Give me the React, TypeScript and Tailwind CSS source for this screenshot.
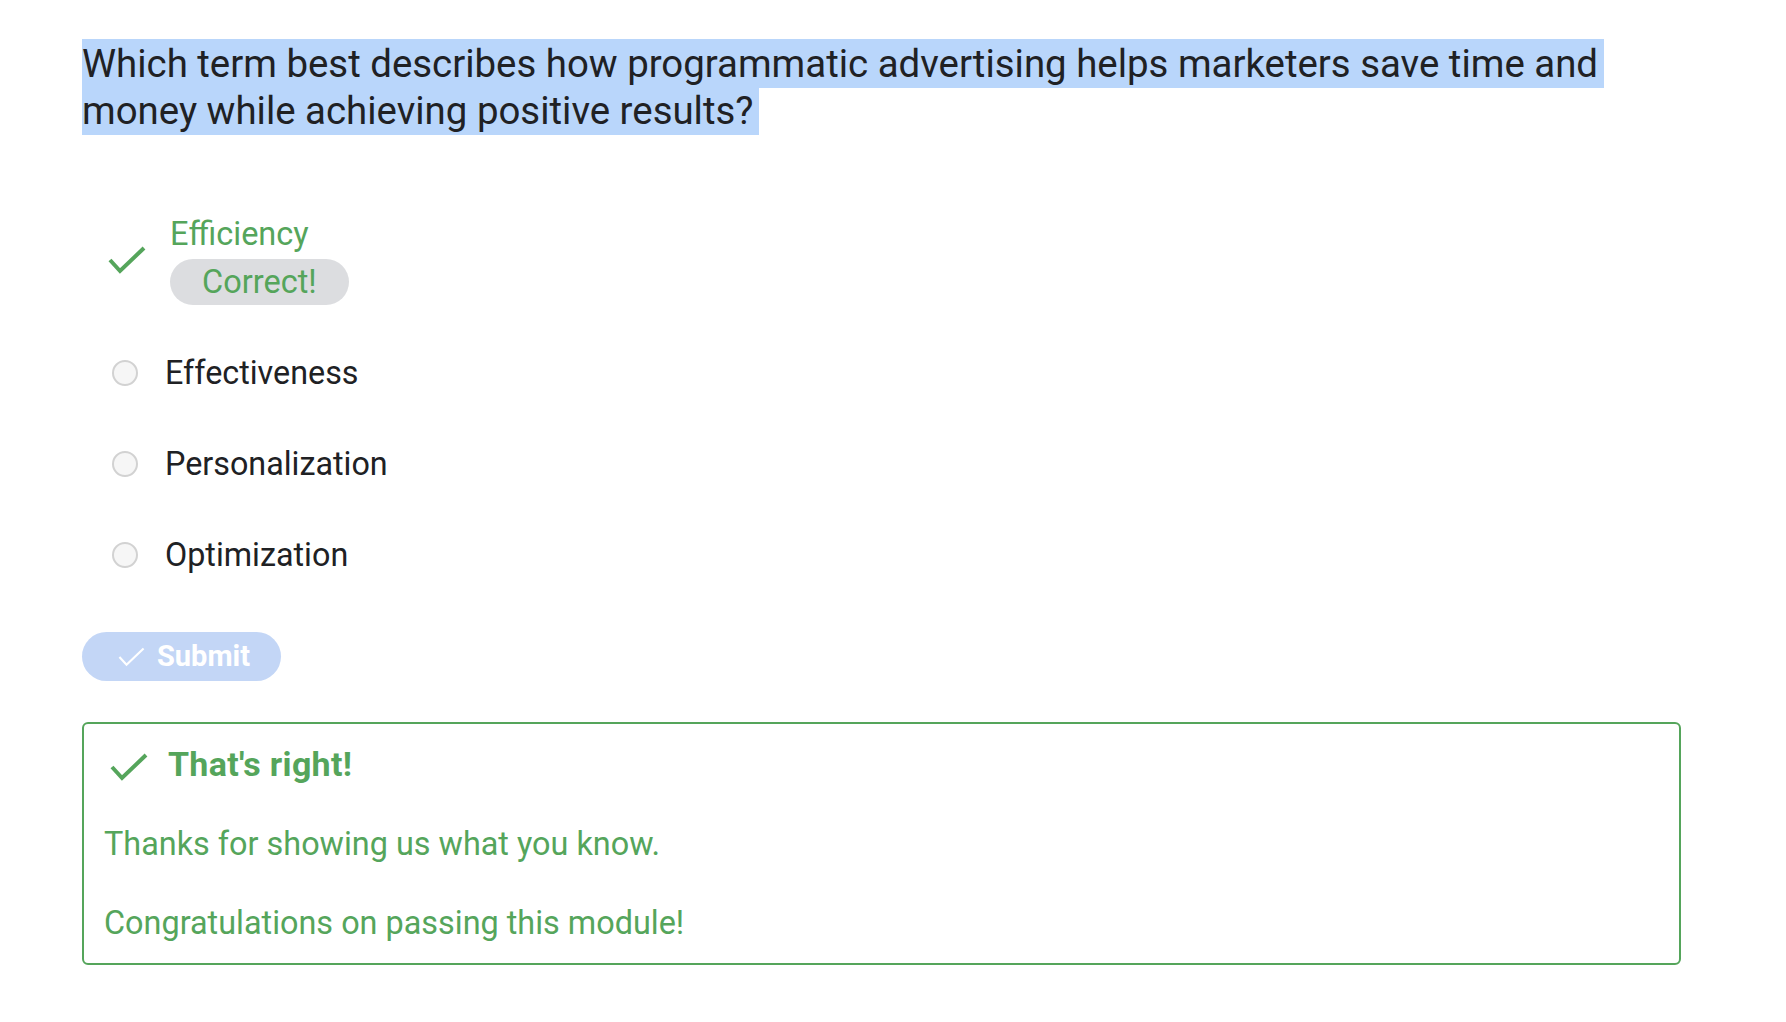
import React from "react";

function Check({ className, stroke = 4 }: { className?: string; stroke?: number }) {
  return (
    <svg className={className} viewBox="0 0 38 30" fill="none">
      <polyline points="2,15 12,26 36,3" stroke="currentColor" strokeWidth={stroke} strokeLinecap="butt" strokeLinejoin="miter" />
    </svg>
  );
}

function Radio() {
  return <span className="block w-[26px] h-[26px] rounded-full border-2 border-[#d2d2d2] bg-[#f6f6f6]" />;
}

export default function App() {
  const options = ["Effectiveness", "Personalization", "Optimization"];
  return (
    <div className="min-h-screen bg-white" style={{ fontFamily: "Roboto, 'Liberation Sans', sans-serif" }}>
      <div className="w-[1599px] ml-[82px] pt-[40px]">
        <p className="text-[38.4px] leading-[47px] text-[#202124] pr-[40px]">
          <span className="bg-[#b9d6fb] py-[2px] pr-[6px] [box-decoration-break:clone]">
            Which term best describes how programmatic advertising helps marketers save time and money while achieving positive results?
          </span>
        </p>

        <div className="mt-[78px] flex flex-col">
          <div className="flex items-start">
            <div className="w-[88px] pl-[26px] pt-[33px] text-[#55a55b]">
              <Check className="w-[38px] h-[30px]" />
            </div>
            <div className="flex flex-col items-start pt-[2px]">
              <span className="text-[32.5px] leading-[40px] text-[#55a55b]">Efficiency</span>
              <span className="mt-[5px] h-[46px] px-[32px] rounded-full bg-[#dcdde0] text-[32.5px] leading-[46px] text-[#55a55b]">Correct!</span>
            </div>
          </div>
          {options.map((o) => (
            <div key={o} className="flex items-center h-[46px] mt-[45px]">
              <div className="w-[83px] pl-[30px]">
                <Radio />
              </div>
              <span className="text-[32.3px] leading-[46px] text-[#202124]">{o}</span>
            </div>
          ))}
        </div>

        <button className="mt-[54px] h-[49px] w-[199px] rounded-full bg-[#c3d6f6] flex items-center pl-[36px] gap-[12px] text-white">
          <Check className="w-[27px] h-[22px]" stroke={3} />
          <span className="text-[29px] font-bold leading-none">Submit</span>
        </button>

        <div className="mt-[41px] h-[243px] border-2 border-[#55a55b] rounded-[6px] pl-[20px] pr-[21px] pt-[20px] text-[#55a55b]">
          <div className="flex items-center">
            <div className="w-[64px] pl-[6px] pt-[6px]">
              <Check className="w-[38px] h-[30px]" />
            </div>
            <span className="text-[34px] font-bold leading-[40px] tracking-[0.3px]">That's right!</span>
          </div>
          <p className="mt-[40px] text-[32.4px] leading-[40px]">Thanks for showing us what you know.</p>
          <p className="mt-[39px] text-[32.4px] leading-[40px]">Congratulations on passing this module!</p>
        </div>
      </div>
    </div>
  );
}
